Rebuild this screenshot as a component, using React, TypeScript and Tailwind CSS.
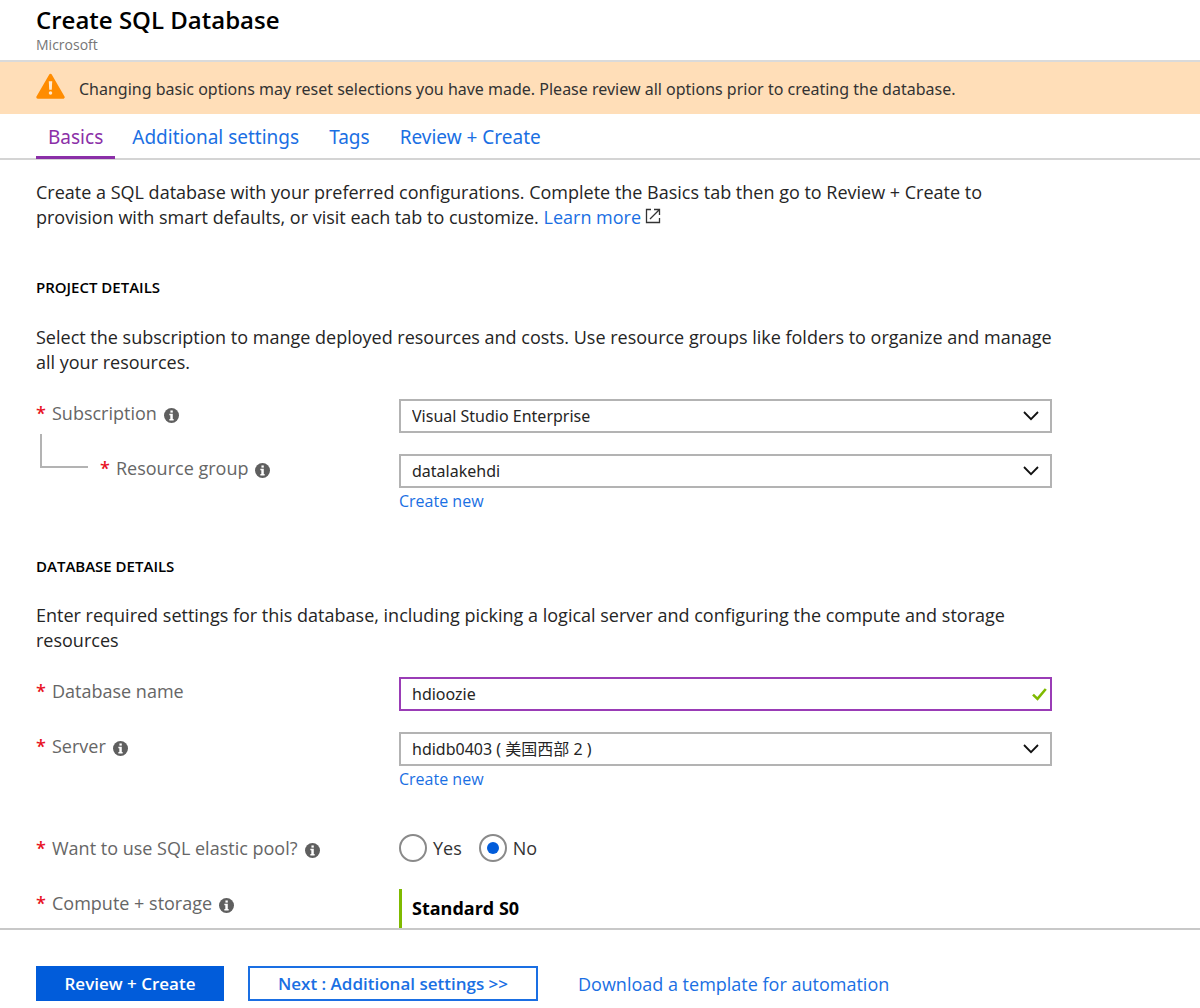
import { useState, type ReactNode } from "react";

function InfoIcon() {
  return (
    <svg viewBox="0 0 14 14" className="mt-1 size-[15px] shrink-0" role="img" aria-label="More information">
      <circle cx="7" cy="7" r="7" fill="#5f5f5f" />
      <rect x="6" y="2.3" width="2.2" height="2" fill="#fff" />
      <path d="M5 5.4h3.2v4.9H9v1.3H5v-1.3h.9V6.7H5z" fill="#fff" />
    </svg>
  );
}

function FieldLabel({ htmlFor, info, children }: { htmlFor?: string; info?: boolean; children: ReactNode }) {
  return (
    <div className="flex h-7 items-center text-[#666]">
      <span className="mr-2 w-2 text-lg font-semibold text-[#e81123]">*</span>
      <label htmlFor={htmlFor} className="mr-[7px] text-lg leading-7">
        {children}
      </label>
      {info && <InfoIcon />}
    </div>
  );
}

function Dropdown({ id, options }: { id: string; options: string[] }) {
  return (
    <div className="relative">
      <select
        id={id}
        className="block h-[34px] w-full appearance-none border-2 border-[#b3b3b3] bg-white pr-10 pl-[11px] font-['Noto_Sans','Noto_Sans_CJK_SC',sans-serif] text-base text-[#252525] outline-none"
      >
        {options.map((option) => (
          <option key={option}>{option}</option>
        ))}
      </select>
      <svg viewBox="0 0 16 10" className="pointer-events-none absolute top-3 right-[13px] h-[10px] w-4" fill="none">
        <path d="M1 1l7 7.2L15 1" stroke="#111" strokeWidth="1.8" />
      </svg>
    </div>
  );
}

function CreateNew() {
  return (
    <a href="#create" className="block w-fit text-base leading-[26px] text-[#1a6fe3]">
      Create new
    </a>
  );
}

function Row({ label, className = "", children }: { label: ReactNode; className?: string; children: ReactNode }) {
  return (
    <div className={`grid grid-cols-[363px_minmax(0,1fr)] ${className}`}>
      <div>{label}</div>
      <div>{children}</div>
    </div>
  );
}

const tabs = ["Basics", "Additional settings", "Tags", "Review + Create"];

export default function App() {
  const [pool, setPool] = useState("No");
  const [name, setName] = useState("hdioozie");

  return (
    <div className="flex min-h-screen flex-col bg-white font-['Open_Sans','Noto_Sans_CJK_SC',sans-serif] text-[#252525]">
      <header className="h-[62px] border-b-2 border-[#dadada] px-9 pt-1">
        <h1 className="text-2xl leading-8 font-semibold text-black">Create SQL Database</h1>
        <p className="text-sm leading-[18px] text-[#767676]">Microsoft</p>
      </header>

      <div role="alert" className="flex h-[52px] items-center gap-[14px] bg-[#ffdeb8] px-9">
        <svg viewBox="0 0 30 26" className="-mt-1 h-[26px] w-[29px] shrink-0">
          <path d="M15 1.8 28.2 24.6H1.8z" fill="#ff8c00" stroke="#ff8c00" strokeWidth="3" strokeLinejoin="round" />
          <path d="M13.2 8h3.6l-.5 9h-2.6z" fill="#ffe9cf" />
          <circle cx="15" cy="20.3" r="1.8" fill="#ffe9cf" />
        </svg>
        <p className="pt-0.5 font-['Noto_Sans',sans-serif] text-base text-[#333]">
          Changing basic options may reset selections you have made. Please review all options prior to creating the
          database.
        </p>
      </div>

      <nav className="flex h-[46px] border-b-2 border-[#d4d4d4] pl-9 font-['Noto_Sans',sans-serif]">
        {tabs.map((tab, i) => (
          <button
            key={tab}
            type="button"
            className={
              i === 0
                ? "mr-[2px] h-[45px] border-b-[3px] border-[#8b2fa8] px-3 pt-1 text-[19px] text-[#8b2fa8]"
                : "h-[45px] px-[15px] pt-px text-[19px] text-[#1a6fe3]"
            }
          >
            {tab}
          </button>
        ))}
      </nav>

      <main className="max-w-[1088px] flex-1 px-9">
        <p className="pt-5 text-lg leading-[25px]">
          Create a SQL database with your preferred configurations. Complete the Basics tab then go to Review + Create to
          provision with smart defaults, or visit each tab to customize.{" "}
          <a href="#learn" className="inline-block text-[#1a6fe3]">
            Learn more
          </a>
          <svg viewBox="0 0 16 16" className="ml-1 inline size-4 align-[0px]" fill="none" stroke="#333" strokeWidth="1.3">
            <path d="M6 1.5H1.5v13h13V10M9 1.5h5.5V7M14.5 1.5 5 11" />
          </svg>
        </p>

        <h2 className="mt-[45px] text-[15px] leading-[25px] font-semibold text-black">PROJECT DETAILS</h2>
        <p className="mt-[25px] text-lg leading-[25px]">
          Select the subscription to mange deployed resources and costs. Use resource groups like folders to organize and
          manage all your resources.
        </p>
        <Row className="mt-6" label={<FieldLabel htmlFor="subscription" info>Subscription</FieldLabel>}>
          <Dropdown id="subscription" options={["Visual Studio Enterprise"]} />
        </Row>
        <Row
          className="mt-[21px]"
          label={
            <div className="flex">
              <span className="-mt-5 mr-3 ml-1 h-[34px] w-12 border-b-2 border-l-2 border-[#b3b3b3]" />
              <FieldLabel htmlFor="group" info>Resource group</FieldLabel>
            </div>
          }
        >
          <Dropdown id="group" options={["datalakehdi"]} />
          <CreateNew />
        </Row>

        <h2 className="mt-10 text-[15px] leading-[25px] font-semibold text-black">DATABASE DETAILS</h2>
        <p className="mt-6 text-lg leading-[25px]">
          Enter required settings for this database, including picking a logical server and configuring the compute and
          storage resources
        </p>
        <Row className="mt-6" label={<FieldLabel htmlFor="name">Database name</FieldLabel>}>
          <div className="relative">
            <input
              id="name"
              value={name}
              onChange={(e) => setName(e.target.value)}
              className="block h-[34px] w-full border-2 border-[#9a3cb6] pr-9 pl-[11px] font-['Noto_Sans',sans-serif] text-base text-[#252525] outline-none"
            />
            <svg viewBox="0 0 15 13" className="pointer-events-none absolute top-[11px] right-[5px] h-[13px] w-[15px]" fill="none">
              <path d="M1 6.6l4.5 4.3L13.8 1" stroke="#7fba00" strokeWidth="2.6" />
            </svg>
          </div>
        </Row>
        <Row className="mt-[21px]" label={<FieldLabel htmlFor="server" info>Server</FieldLabel>}>
          <Dropdown id="server" options={["hdidb0403 ( 美国西部 2 )"]} />
          <CreateNew />
        </Row>
        <Row className="mt-[42px]" label={<FieldLabel info>Want to use SQL elastic pool?</FieldLabel>}>
          <div role="radiogroup" aria-label="Want to use SQL elastic pool?" className="flex h-7 items-center gap-[17px]">
            {["Yes", "No"].map((value) => (
              <label key={value} className="flex items-center gap-[6px] text-lg text-[#333]">
                <input
                  type="radio"
                  name="pool"
                  value={value}
                  checked={pool === value}
                  onChange={() => setPool(value)}
                  className="grid size-7 appearance-none place-items-center rounded-full border-2 border-[#8a8a8a] before:size-3 before:rounded-full checked:before:bg-[#015cda]"
                />
                {value}
              </label>
            ))}
          </div>
        </Row>
        <Row className="mt-[27px]" label={<FieldLabel info>Compute + storage</FieldLabel>}>
          <div className="h-[39px] border-l-[3px] border-[#7fba00] pl-[10px] text-lg leading-[38px] font-bold text-black">
            Standard S0
          </div>
        </Row>
      </main>

      <footer className="flex h-20 items-start border-t-2 border-[#c8c8c8] px-9 pt-9">
        <button type="button" className="h-[35px] w-[188px] bg-[#015cda] text-[17px] font-semibold text-white">
          Review + Create
        </button>
        <button type="button" className="ml-6 h-[35px] w-[290px] border-2 border-[#1a6fe3] text-[17px] font-semibold text-[#1a6fe3]">
          Next : Additional settings &gt;&gt;
        </button>
        <a href="#template" className="ml-10 text-lg leading-9 text-[#1a6fe3]">
          Download a template for automation
        </a>
      </footer>
    </div>
  );
}
